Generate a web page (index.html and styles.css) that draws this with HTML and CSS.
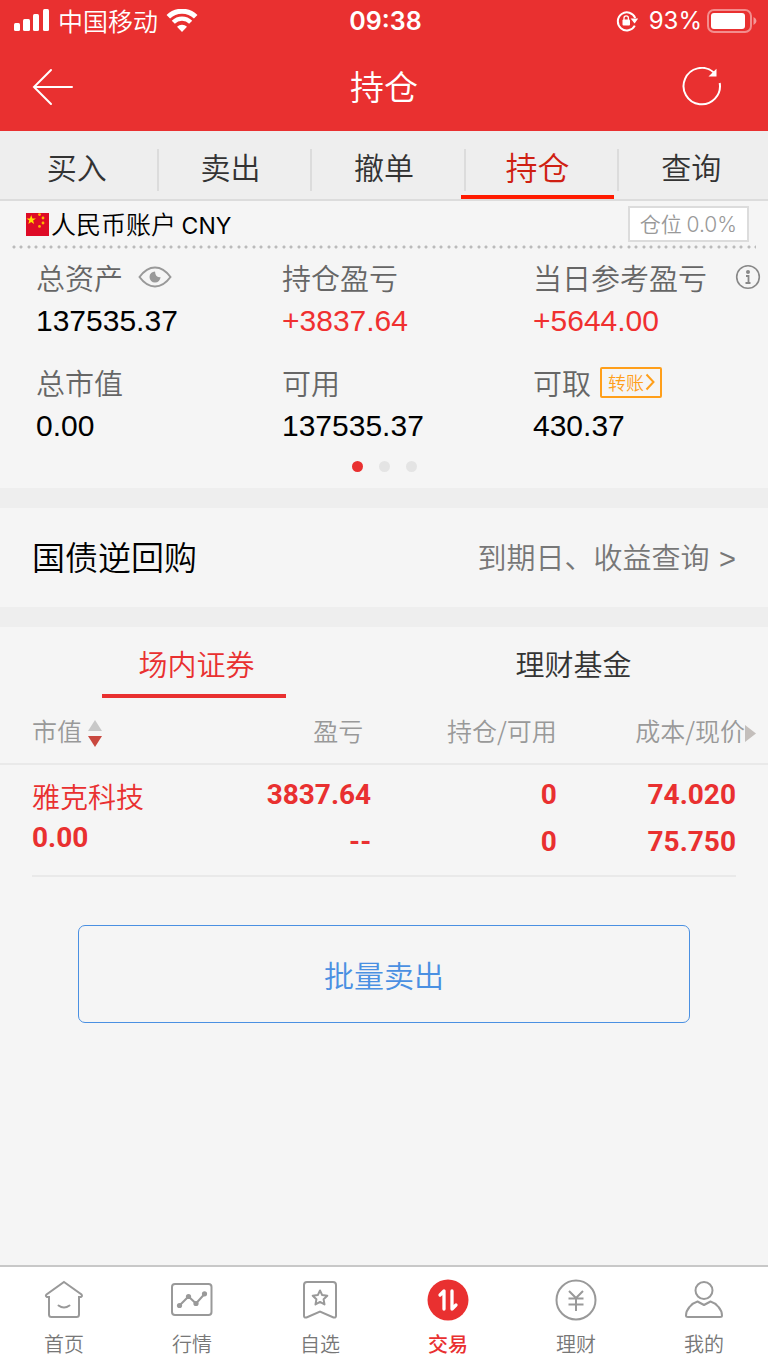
FILE: index.html
```
<!DOCTYPE html>
<html lang="zh-CN">
<head>
  <meta charset="UTF-8" />
  <meta name="viewport" content="width=device-width, initial-scale=1">
  <title>持仓</title>
  <link rel="stylesheet" href="styles.css">
</head>
<body>

  <header class="header">
    <div class="status">
      <div class="status-left">
        <svg width="36" height="24" viewBox="0 0 36 24" fill="#fff">
          <rect x="0" y="14" width="6" height="8" rx="1.5"/>
          <rect x="9" y="10" width="7" height="12" rx="1.5"/>
          <rect x="19" y="5" width="6" height="17" rx="1.5"/>
          <rect x="29" y="0" width="6" height="22" rx="1.5"/>
        </svg>
        <span class="carrier">中国移动</span>
        <svg width="32" height="24" viewBox="0 0 32 24">
          <path d="M2.3 7.8a19.5 19.5 0 0 1 27.4 0" fill="none" stroke="#fff" stroke-width="5"/>
          <path d="M7.3 13.2a12.3 12.3 0 0 1 17.4 0" fill="none" stroke="#fff" stroke-width="4.4"/>
          <path d="M16 23l-5-5.2a7.2 7.2 0 0 1 10 0z" fill="#fff"/>
        </svg>
      </div>
      <span class="time">09:38</span>
      <div class="status-right">
        <svg width="23" height="22" viewBox="0 0 23 22">
          <path d="M18.8 15.6A9 9 0 1 1 19.2 8" fill="none" stroke="#fff" stroke-width="2"/>
          <path d="M14.6 8.5h7.6l-3.6 5z" fill="#fff"/>
          <rect x="6.5" y="9.5" width="7.5" height="6" rx="1" fill="#fff"/>
          <path d="M8 10V8a2.2 2.2 0 0 1 4.4 0v2" fill="none" stroke="#fff" stroke-width="1.3"/>
        </svg>
        <span class="percent">93%</span>
        <svg width="50" height="24" viewBox="0 0 50 24">
          <rect x="1" y="1" width="43" height="22" rx="6" fill="none" stroke="#fff" stroke-opacity=".45" stroke-width="2"/>
          <rect x="4" y="4" width="34" height="16" rx="3" fill="#fff"/>
          <path d="M46.5 8q3 1.5 3 4t-3 4z" fill="#fff" fill-opacity=".5"/>
        </svg>
      </div>
    </div>
    <div class="titlebar">
      <button class="icon-btn" aria-label="返回">
        <svg width="42" height="38" viewBox="0 0 42 38" fill="none" stroke="#fff" stroke-width="2" stroke-linecap="round">
          <path d="M19 2L2 19l17 17M2 19h38"/>
        </svg>
      </button>
      <h1>持仓</h1>
      <button class="icon-btn" aria-label="刷新">
        <svg width="40" height="40" viewBox="0 0 40 40">
          <path d="M31.5 5.2A18.2 18.2 0 1 0 37.7 16" fill="none" stroke="#fff" stroke-width="2"/>
          <path d="M34.5 1.800v7.800h-8z" fill="#fff"/>
        </svg>
      </button>
    </div>
  </header>

  <nav class="tabs">
    <a href="#">买入</a>
    <a href="#">卖出</a>
    <a href="#">撤单</a>
    <a href="#" class="active">持仓</a>
    <a href="#">查询</a>
  </nav>

  <main>
    <section class="account">
      <div class="account-head">
        <svg width="23" height="23" viewBox="0 0 23 23">
          <rect width="23" height="23" fill="#de0a26"/>
          <path fill="#ffde00" d="M5.2 2l1.2 3.4h3.5L7.1 7.5l1 3.5-2.9-2.1L2.3 11l1-3.5L.5 5.4H4z"/>
          <g fill="#ffb400">
            <circle cx="13.5" cy="1.6" r="1.4"/><circle cx="17" cy="5" r="1.4"/>
            <circle cx="17" cy="10" r="1.4"/><circle cx="13.5" cy="13.4" r="1.4"/>
          </g>
        </svg>
        <h2>人民币账户 <span>CNY</span></h2>
        <span class="position">仓位 <span>0.0%</span></span>
      </div>
      <dl class="stats">
        <div>
          <dt>总资产
            <button class="icon-btn eye" aria-label="显示资产">
              <svg width="34" height="22" viewBox="0 0 34 22">
                <path d="M1.5 11Q8.5 1.5 17 1.5T32.5 11Q25.5 20.5 17 20.5T1.5 11z" fill="none" stroke="#999" stroke-width="2"/>
                <path d="M17 5.5a5.5 5.5 0 1 0 5.5 5.5q-5 1-5.500-5.500z" fill="#999"/>
              </svg>
            </button>
          </dt>
          <dd>137535.37</dd>
        </div>
        <div>
          <dt>持仓盈亏</dt>
          <dd class="up">+3837.64</dd>
        </div>
        <div>
          <dt>当日参考盈亏
            <button class="icon-btn info" aria-label="说明">
              <svg width="26" height="26" viewBox="0 0 26 26">
                <circle cx="13" cy="13" r="11.3" fill="none" stroke="#888" stroke-width="1.6"/>
                <circle cx="13" cy="8" r="2" fill="#888"/>
                <path d="M11 12h2.5v7M10.5 19h5" fill="none" stroke="#888" stroke-width="1.8"/>
              </svg>
            </button>
          </dt>
          <dd class="up">+5644.00</dd>
        </div>
        <div>
          <dt>总市值</dt>
          <dd>0.00</dd>
        </div>
        <div>
          <dt>可用</dt>
          <dd>137535.37</dd>
        </div>
        <div>
          <dt>可取
            <button class="transfer">转账<svg width="10" height="18" viewBox="0 0 10 18" fill="none" stroke="#ff9f1a" stroke-width="2"><path d="M1.5 1.5L8.5 9l-7 7.5"/></svg></button>
          </dt>
          <dd>430.37</dd>
        </div>
      </dl>
      <div class="dots"><i class="on"></i><i></i><i></i></div>
    </section>

    <section class="repo">
      <h2>国债逆回购</h2>
      <a href="#">到期日、收益查询 <span>&gt;</span></a>
    </section>

    <section class="holdings">
      <div class="subtabs">
        <button class="active">场内证券</button>
        <button>理财基金</button>
      </div>
      <table>
        <thead>
          <tr>
            <th>市值
              <svg width="14" height="27" viewBox="0 0 14 27"><path d="M7 0l7 11H0z" fill="#c8c8c8"/><path d="M0 16h14L7 27z" fill="#c9483f"/></svg>
            </th>
            <th>盈亏</th>
            <th>持仓/可用</th>
            <th>成本/现价<svg class="more" width="11" height="17" viewBox="0 0 11 17"><path d="M0 0l11 8.500L0 17z" fill="#c4bfbc"/></svg></th>
          </tr>
        </thead>
        <tbody>
          <tr>
            <td><span class="name">雅克科技</span><span>0.00</span></td>
            <td><span>3837.64</span><span>--</span></td>
            <td><span>0</span><span>0</span></td>
            <td><span>74.020</span><span>75.750</span></td>
          </tr>
        </tbody>
      </table>
    </section>

    <button class="sell-all">批量卖出</button>
  </main>

  <nav class="tabbar">
    <a href="#">
      <svg width="42" height="42" viewBox="0 0 42 42">
        <path d="M21 3L38.5 15.5q1 1.5-.5 2.5H36v17.5q0 2.5-2.5 2.5h-25Q6 38 6 35.5V18H4Q2 17 3.5 15.5z"/>
        <path d="M15.5 26.5q5.5 4 11 0" stroke-linecap="round"/>
      </svg>
      首页
    </a>
    <a href="#">
      <svg width="42" height="42" viewBox="0 0 42 42">
        <rect x="1" y="5" width="39.5" height="31" rx="3"/>
        <path d="M8.5 26.5l9-9 7.5 7 8.5-9.5"/>
        <g class="solid"><circle cx="8.5" cy="26.5" r="2.6"/><circle cx="17.5" cy="17.5" r="2.6"/><circle cx="25" cy="24.5" r="2.6"/><circle cx="33.5" cy="14.8" r="2.6"/></g>
      </svg>
      行情
    </a>
    <a href="#">
      <svg width="42" height="42" viewBox="0 0 42 42">
        <path d="M8 3h26q3 0 3 3v31q0 2-2.5 1.5L21 32.5 7.5 38.5Q5 39 5 37V6q0-3 3-3z"/>
        <path d="M21 11.5l2.2 4.6 5.1.7-3.7 3.5.9 5.1-4.5-2.5-4.5 2.5.9-5.1-3.7-3.5 5.1-.7z" stroke-linejoin="round"/>
      </svg>
      自选
    </a>
    <a href="#" class="active">
      <svg width="42" height="42" viewBox="0 0 42 42">
        <circle cx="21" cy="21" r="20.5" fill="#e93030" stroke="none"/>
        <path d="M13 16l4-4v18M25 12v18l4-4" stroke="#fff" stroke-width="3.3" stroke-linecap="round" stroke-linejoin="round"/>
      </svg>
      交易
    </a>
    <a href="#">
      <svg width="42" height="42" viewBox="0 0 42 42">
        <circle cx="21" cy="21" r="19.5"/>
        <path d="M14 12l7 7 7-7M13.5 19.5h15M13.5 25.5h15M21 19v13"/>
      </svg>
      理财
    </a>
    <a href="#">
      <svg width="42" height="42" viewBox="0 0 42 42">
        <circle cx="21" cy="11.5" r="8.5"/>
        <path d="M14.5 22.5L21 26l6.5-3.5q5 1.5 8 5.5 3.5 4 3.5 8.5 0 1.5-2 1.5H5q-2 0-2-1.5 0-4.500 3.500-8.500 3-4 8-5.500z" stroke-linejoin="round"/>
      </svg>
      我的
    </a>
  </nav>

</body>
</html>
```
FILE: styles.css
```
* {
  box-sizing: border-box;
}
body {
  margin: 0;
  min-height: 100vh;
  display: flex;
  flex-direction: column;
  background: #f5f5f5;
  color: #000;
  font-family: "Noto Sans CJK SC", sans-serif;
  font-weight: 350;
}
h1, h2, dl, dd {
  margin: 0;
  font-weight: inherit;
}
a {
  color: inherit;
  text-decoration: none;
}
button {
  font: inherit;
  color: inherit;
  background: none;
  border: none;
  padding: 0;
  cursor: pointer;
}
svg {
  display: block;
  flex: none;
}

/* Header */
.header {
  background: #e93030;
  color: #fff;
}
.status {
  height: 42px;
  padding: 0 11px 0 14px;
  display: grid;
  grid-template-columns: 1fr auto 1fr;
  align-items: center;
}
.status-left, .status-right {
  display: flex;
  align-items: center;
  gap: 8px;
}
.carrier {
  font-size: 25px;
  line-height: 40px;
  padding-bottom: 2px;
}
.status-right {
  justify-content: flex-end;
  gap: 5px;
}
.status-right svg:first-child {
  margin-right: 5px;
}
.time, .percent {
  font-family: Inter, sans-serif;
  font-size: 25px;
  font-weight: 600;
  line-height: 42px;
}
.percent {
  font-size: 24px;
  font-weight: 400;
}
.titlebar {
  height: 89px;
  padding: 0 46px 0 32px;
  display: flex;
  align-items: center;
}
.titlebar h1 {
  flex: 1;
  padding: 0 0 2px 12px;
  text-align: center;
  font-size: 34px;
  line-height: 44px;
}

/* Trade tabs */
.tabs {
  display: flex;
  height: 70px;
  background: #eee;
  border-bottom: 2px solid #dcdcdc;
}
.tabs a {
  position: relative;
  flex: 1;
  text-align: center;
  font-size: 30px;
  line-height: 70px;
  color: #333;
}
.tabs a + a::before {
  content: "";
  position: absolute;
  left: 3px;
  top: 18px;
  height: 42px;
  border-left: 2px solid #dcdcdc;
}
.tabs .active {
  font-size: 32px;
  color: #cf1f12;
}
.tabs .active::after {
  content: "";
  position: absolute;
  left: 0;
  right: 0;
  bottom: 0;
  height: 4px;
  background: #ff1a00;
}

/* Account summary */
.account {
  padding-bottom: 15px;
}
.account-head {
  display: flex;
  align-items: center;
  height: 48px;
  margin: 0 12px;
  padding: 0 7px 2px 14px;
  background:
    radial-gradient(circle at 2px 2px, #bbb 1px, transparent 2px) 0 100% / 15px 4px repeat-x,
    radial-gradient(circle at 2px 2px, #bbb 1px, transparent 2px) 7px 100% / 15px 4px repeat-x;
}
.account-head h2 {
  flex: 1;
  padding-left: 2px;
  font-size: 25px;
  line-height: 46px;
}
.account-head h2 span {
  font-family: Inter, sans-serif;
  font-size: 23px;
  font-weight: 400;
}
.position {
  padding: 0 10px;
  border: 2px solid #dcdcdc;
  background: #fff;
  color: #999;
  font-size: 21px;
  line-height: 31px;
}
.position span {
  font-family: Inter, sans-serif;
  font-size: 21px;
}
.stats {
  display: grid;
  grid-template-columns: 246fr 251fr 228fr;
  row-gap: 17px;
  padding: 6px 7px 0 36px;
}
.stats dt {
  display: flex;
  align-items: center;
  height: 44px;
  font-size: 29px;
  line-height: 44px;
  color: #666;
}
.stats dd {
  font-family: "Liberation Sans", Arial, sans-serif;
  font-size: 30px;
  font-weight: 400;
  line-height: 44px;
}
.stats .up {
  color: #f03030;
}
.eye {
  margin-left: 15px;
}
.info {
  margin-left: auto;
}
.transfer {
  display: flex;
  align-items: center;
  gap: 1px;
  height: 31px;
  margin-left: 9px;
  padding: 0 5px 0 6px;
  border: 2px solid #ff9f1a;
  border-radius: 2px;
  color: #ff9f1a;
  font-size: 18px;
}
.dots {
  display: flex;
  justify-content: center;
  gap: 16px;
  padding: 13px 0 1px;
}
.dots i {
  width: 11px;
  height: 11px;
  border-radius: 50%;
  background: #e4e4e4;
}
.dots .on {
  background: #e93030;
}

/* Repo row */
.repo {
  display: flex;
  align-items: center;
  justify-content: space-between;
  height: 139px;
  padding: 0 32px 3px;
  border: solid #eee;
  border-width: 20px 0;
}
.repo h2 {
  font-size: 33px;
}
.repo a {
  color: #777;
  font-size: 29px;
}
.repo span {
  margin-left: 3px;
  font-family: "Liberation Sans", Arial, sans-serif;
}

/* Holdings */
.subtabs {
  display: flex;
  height: 71px;
  padding-right: 6px;
}
.subtabs button {
  position: relative;
  flex: 1;
  font-size: 29px;
  color: #333;
}
.subtabs button:first-child {
  padding-left: 8px;
}
.subtabs .active {
  color: #e93030;
}
.subtabs .active::after {
  content: "";
  position: absolute;
  left: calc(50% - 91px);
  bottom: 0;
  width: 184px;
  height: 4px;
  background: #e93030;
}
.holdings table {
  width: 100%;
  table-layout: fixed;
  border-collapse: collapse;
  text-align: right;
}
.holdings th {
  height: 66px;
  padding: 0 0 2px;
  border-bottom: 2px solid #e9e9e9;
  font-size: 25px;
  font-weight: inherit;
  color: #999;
  white-space: nowrap;
}
.holdings th:nth-child(2) {
  padding-right: 8px;
}
.holdings th:first-child, .holdings td:first-child {
  padding-left: 32px;
  text-align: left;
}
.holdings th:last-child {
  width: 27.5%;
  padding-right: 12px;
}
.holdings td:last-child {
  padding-right: 32px;
}
.holdings th svg {
  display: inline-block;
  vertical-align: middle;
}
.holdings td {
  padding: 6px 0 12px;
  color: #e93030;
  font-family: Roboto, sans-serif;
  font-size: 28px;
  font-weight: 700;
  vertical-align: top;
}
.holdings td span {
  display: block;
  line-height: 47px;
}
.holdings td:first-child {
  padding-top: 10px;
}
.holdings td:first-child span {
  line-height: 42px;
}
.holdings td .name {
  font-family: "Noto Sans CJK SC", sans-serif;
  font-weight: 350;
}
.holdings tbody {
  background: linear-gradient(#e9e9e9, #e9e9e9) 32px 100% / calc(100% - 64px) 2px no-repeat;
}

.sell-all {
  display: block;
  width: calc(100% - 156px);
  height: 98px;
  margin: 48px auto;
  border: 1px solid #4a90e2;
  border-radius: 7px;
  color: #4a90e2;
  font-size: 30px;
}

/* Bottom bar */
.tabbar {
  display: flex;
  height: 102px;
  margin-top: auto;
  padding-top: 12px;
  border-top: 2px solid #c8c8c8;
  background: #fff;
}
.tabbar a {
  flex: 1;
  display: flex;
  flex-direction: column;
  align-items: center;
  gap: 8px;
  font-size: 20px;
  line-height: 30px;
  color: #777;
}
.tabbar svg {
  fill: none;
  stroke: #999;
  stroke-width: 2;
}
.tabbar .solid {
  fill: #999;
  stroke: none;
}
.tabbar .active {
  color: #e93030;
  font-weight: 500;
}
```
